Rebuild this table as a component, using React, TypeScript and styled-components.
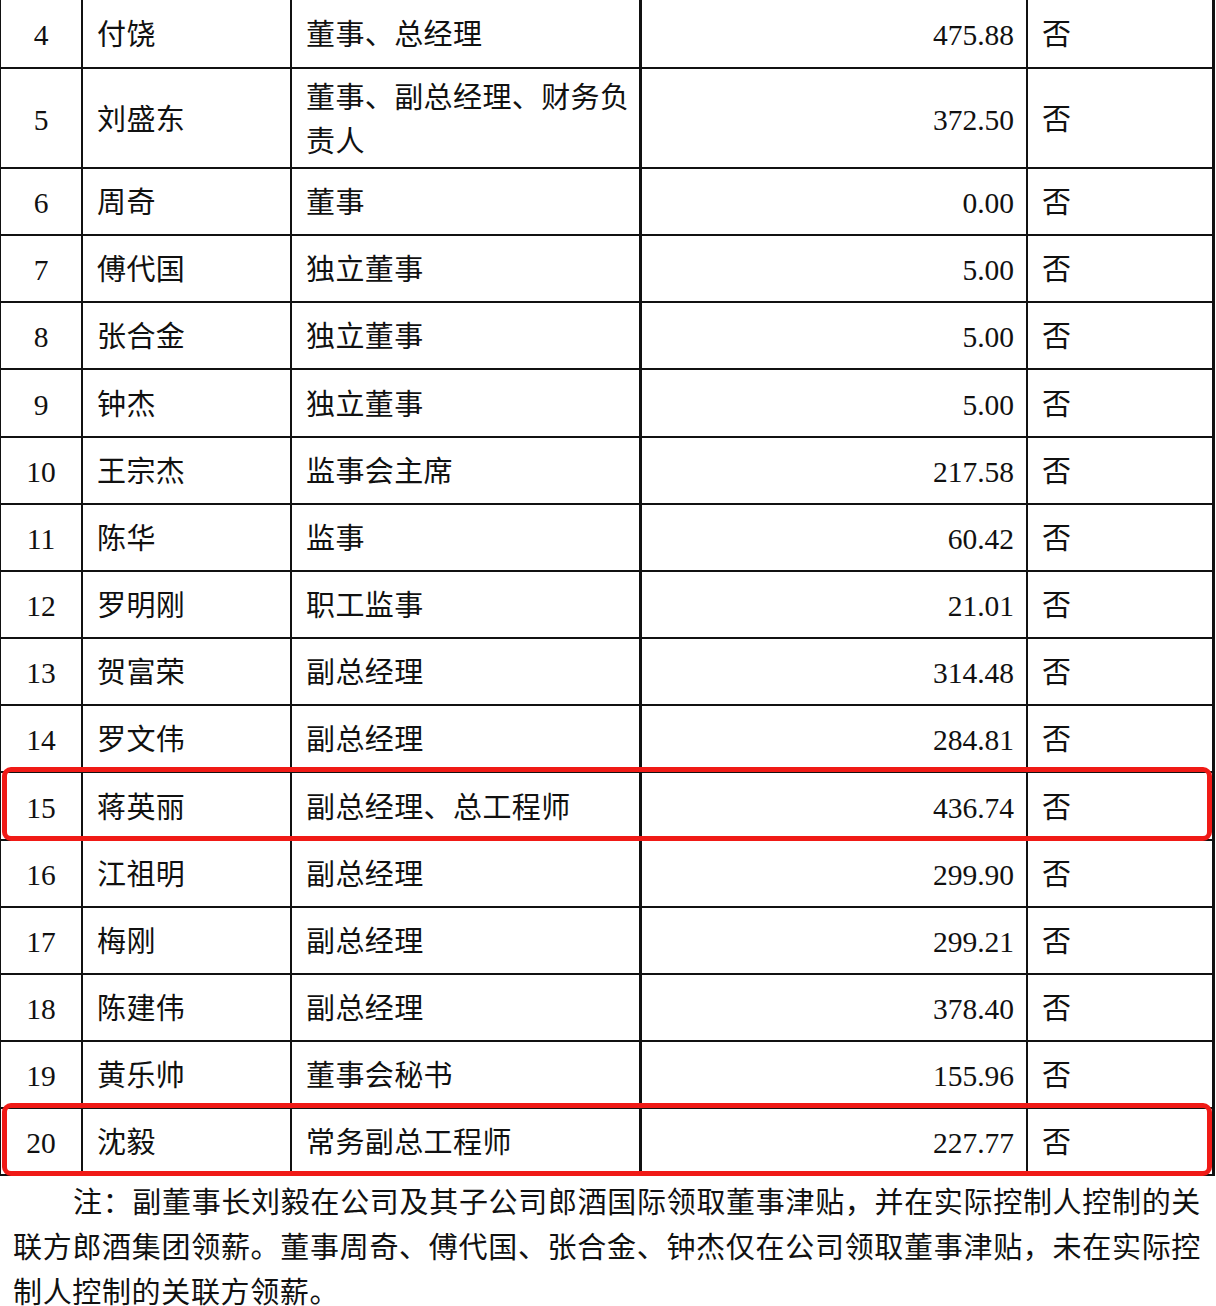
import React from 'react';
import styled, { createGlobalStyle, css } from 'styled-components';

const GlobalStyle = createGlobalStyle`
  html, body {
    margin: 0;
    padding: 0;
    background: #fff;
  }
  body {
    font-family: "Liberation Serif", "Noto Sans CJK SC", serif;
    color: #111;
  }
`;

const Page = styled.div`
  width: 1216px;
  background: #fff;
`;

const Table = styled.div`
  width: 1215px;
  display: flex;
  flex-direction: column;
`;

const Row = styled.div<{ $h: number; $marked?: boolean }>`
  position: relative;
  display: grid;
  grid-template-columns: 82px 209px 350px 386px 187px;
  height: ${p => p.$h}px;
  box-sizing: border-box;
  border-left: 1px solid #111;
  border-bottom: 2px solid #111;

  ${p =>
    p.$marked &&
    css`
      &::after {
        content: '';
        position: absolute;
        top: -6px;
        bottom: -2px;
        left: 1px;
        right: 3px;
        border: 5px solid #f01a16;
        border-radius: 9px;
        pointer-events: none;
      }
    `}
`;

const Cell = styled.div<{ $align?: 'left' | 'center' | 'right'; $heavy?: boolean }>`
  display: flex;
  align-items: center;
  justify-content: ${p =>
    p.$align === 'center' ? 'center' : p.$align === 'right' ? 'flex-end' : 'flex-start'};
  text-align: ${p => p.$align || 'left'};
  box-sizing: border-box;
  border-right: ${p => (p.$heavy ? 3 : 2)}px solid #111;
  padding: 3px 8px 0 14px;
  font-size: 29px;
  letter-spacing: 0.4px;
  line-height: 44px;
`;

const NumCell = styled(Cell)`
  font-size: 29.5px;
  letter-spacing: 0;
  padding: 3px 12px 0 0;
`;

const IndexCell = styled(Cell)`
  font-size: 29.5px;
  letter-spacing: 0;
  padding: 3px 0 0 0;
`;

const Note = styled.p`
  margin: 2px 0 0;
  padding-left: 13px;
  width: 1188px;
  font-size: 29px;
  letter-spacing: 0.65px;
  line-height: 45px;
  text-indent: 60px;
  text-align: justify;
  font-family: "Noto Sans CJK SC", sans-serif;
`;

type Person = {
  no: string;
  name: string;
  title: string;
  pay: string;
  h: number;
  marked?: boolean;
};

const people: Person[] = [
  { no: '4', name: '付饶', title: '董事、总经理', pay: '475.88', h: 69 },
  { no: '5', name: '刘盛东', title: '董事、副总经理、财务负责人', pay: '372.50', h: 100 },
  { no: '6', name: '周奇', title: '董事', pay: '0.00', h: 67 },
  { no: '7', name: '傅代国', title: '独立董事', pay: '5.00', h: 67 },
  { no: '8', name: '张合金', title: '独立董事', pay: '5.00', h: 67 },
  { no: '9', name: '钟杰', title: '独立董事', pay: '5.00', h: 68 },
  { no: '10', name: '王宗杰', title: '监事会主席', pay: '217.58', h: 67 },
  { no: '11', name: '陈华', title: '监事', pay: '60.42', h: 67 },
  { no: '12', name: '罗明刚', title: '职工监事', pay: '21.01', h: 67 },
  { no: '13', name: '贺富荣', title: '副总经理', pay: '314.48', h: 67 },
  { no: '14', name: '罗文伟', title: '副总经理', pay: '284.81', h: 67 },
  { no: '15', name: '蒋英丽', title: '副总经理、总工程师', pay: '436.74', h: 68, marked: true },
  { no: '16', name: '江祖明', title: '副总经理', pay: '299.90', h: 67 },
  { no: '17', name: '梅刚', title: '副总经理', pay: '299.21', h: 67 },
  { no: '18', name: '陈建伟', title: '副总经理', pay: '378.40', h: 67 },
  { no: '19', name: '黄乐帅', title: '董事会秘书', pay: '155.96', h: 67 },
  { no: '20', name: '沈毅', title: '常务副总工程师', pay: '227.77', h: 67, marked: true },
];

const App: React.FC = () => {
  return (
    <Page>
      <GlobalStyle />
      <Table>
        {people.map(p => (
          <Row key={p.no} $h={p.h} $marked={p.marked}>
            <IndexCell $align="center">{p.no}</IndexCell>
            <Cell>{p.name}</Cell>
            <Cell $heavy>{p.title}</Cell>
            <NumCell $align="right">{p.pay}</NumCell>
            <Cell $heavy>否</Cell>
          </Row>
        ))}
      </Table>
      <Note>
        注：副董事长刘毅在公司及其子公司郎酒国际领取董事津贴，并在实际控制人控制的关联方郎酒集团领薪。董事周奇、傅代国、张合金、钟杰仅在公司领取董事津贴，未在实际控制人控制的关联方领薪。
      </Note>
    </Page>
  );
};

export default App;
